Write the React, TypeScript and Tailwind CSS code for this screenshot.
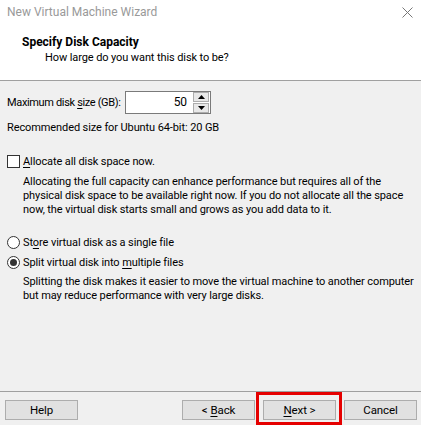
import React from 'react'

const font = { fontFamily: 'Roboto, "Liberation Sans", Arial, sans-serif' }

function Btn({ children, className = '' }: { children: React.ReactNode; className?: string }) {
  return (
    <button
      className={
        'flex h-[20px] w-[73px] items-center justify-center border border-[#adadad] bg-[#e1e1e1] text-[11.5px] text-black ' +
        className
      }
    >
      {children}
    </button>
  )
}

function Radio({ checked }: { checked?: boolean }) {
  return (
    <span className="flex h-[13px] w-[13px] items-center justify-center rounded-full border border-[#333] bg-white">
      {checked && <span className="h-[7px] w-[7px] rounded-full bg-[#333]" />}
    </span>
  )
}

export default function App() {
  return (
    <div
      className="flex h-[425px] w-[421px] flex-col overflow-hidden whitespace-nowrap bg-[#f0f0f0] text-[11px] leading-[15px] tracking-[-0.1px] text-black"
      style={font}
    >
      <div className="h-[81px] border-b border-[#a0a0a0] bg-white">
        <div className="flex h-[25px] items-center justify-between pl-[7px] pr-[8px]">
          <span className="text-[12px] tracking-normal text-[#999]">New Virtual Machine Wizard</span>
          <svg width="11" height="11" viewBox="0 0 11 11" className="mt-[-1px]">
            <path d="M0.5 0.5 L10.5 10.5 M10.5 0.5 L0.5 10.5" stroke="#777" strokeWidth="1" />
          </svg>
        </div>
        <div className="pl-[22px] pt-[10px]">
          <div className="text-[12px] font-bold tracking-normal">Specify Disk Capacity</div>
          <div className="pl-[23px]">How large do you want this disk to be?</div>
        </div>
      </div>

      <div className="flex-1 pl-[7px]">
        <div className="mt-[10px] flex h-[23px] items-center">
          <span className="w-[118px] tracking-[-0.35px]">
            Maximum disk <u className="underline-offset-2">s</u>ize (GB):
          </span>
          <div className="flex h-[23px] w-[86px] items-center border border-[#7a7a7a] bg-white">
            <span className="flex-1 pr-[6px] text-right text-[12px]">50</span>
            <div className="mr-[1px] flex h-[21px] w-[16px] flex-col gap-[1px]">
              <span className="flex flex-1 items-center justify-center border border-[#adadad] bg-[#e8e8e8]">
                <svg width="7" height="4" viewBox="0 0 7 4">
                  <path d="M3.5 0 L7 4 L0 4 Z" fill="#000" />
                </svg>
              </span>
              <span className="flex flex-1 items-center justify-center border border-[#adadad] bg-[#e8e8e8]">
                <svg width="7" height="4" viewBox="0 0 7 4">
                  <path d="M0 0 L7 0 L3.5 4 Z" fill="#000" />
                </svg>
              </span>
            </div>
          </div>
        </div>
        <div className="mt-[6px]">Recommended size for Ubuntu 64-bit: 20 GB</div>

        <div className="mt-[19px] flex items-center gap-[3px]">
          <span className="h-[13px] w-[13px] border border-[#333] bg-white" />
          <span>
            <u className="underline-offset-2">A</u>llocate all disk space now.
          </span>
        </div>
        <p className="mt-[6px] pl-[16px] leading-[14px]">
          Allocating the full capacity can enhance performance but requires all of the
          <br />
          physical disk space to be available right now. If you do not allocate all the space
          <br />
          now, the virtual disk starts small and grows as you add data to it.
        </p>

        <div className="mt-[18px] flex items-center gap-[3px]">
          <Radio />
          <span>
            St<u className="underline-offset-2">o</u>re virtual disk as a single file
          </span>
        </div>
        <div className="mt-[5px] flex items-center gap-[3px]">
          <Radio checked />
          <span>
            Split virtual disk into <u className="underline-offset-2">m</u>ultiple files
          </span>
        </div>
        <p className="mt-[5px] pl-[16px] leading-[14px]">
          Splitting the disk makes it easier to move the virtual machine to another computer
          <br />
          but may reduce performance with very large disks.
        </p>
      </div>

      <div className="flex h-[34px] items-start border-t border-[#a0a0a0] pl-[5px] pr-[4px] pt-[8px]">
        <Btn className="w-[72px]">Help</Btn>
        <div className="ml-auto flex gap-[8px]">
          <Btn>
            &lt; <u className="ml-[3px] underline-offset-2">B</u>ack
          </Btn>
          <div className="relative">
            <Btn>
              <u className="underline-offset-2">N</u>ext &gt;
            </Btn>
            <span className="pointer-events-none absolute -bottom-[5px] -left-[7px] -right-[6px] -top-[8px] border-[3px] border-[#e50000]" />
          </div>
          <Btn>Cancel</Btn>
        </div>
      </div>
    </div>
  )
}
